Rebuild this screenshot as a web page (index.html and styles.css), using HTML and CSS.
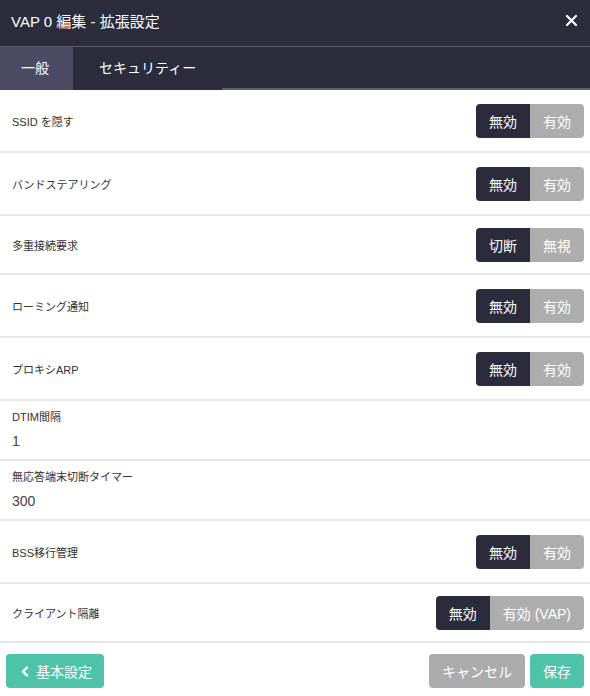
FILE: index.html
```html
<!DOCTYPE html>
<html lang="ja">
<head>
    <meta charset="UTF-8">
    <meta name="viewport" content="width=device-width, initial-scale=1.0">
    <title>VAP 0 編集 - 拡張設定</title>
    <link rel="stylesheet" href="styles.css">
</head>
<body>
    <div class="modal">
        <div class="header">
            <span class="title">VAP 0 編集 - 拡張設定</span>
            <svg class="close" width="11" height="11" viewBox="0 0 11 11">
                <path d="M1 1 L10 10 M10 1 L1 10" stroke="#fff" stroke-width="2.2" stroke-linecap="round"/>
            </svg>
        </div>
        <div class="tabs">
            <span class="tab active">一般</span>
            <span class="tab">セキュリティー</span>
            <span class="tab-rest"></span>
        </div>

        <div class="row">
            <span class="label">SSID を隠す</span>
            <div class="switch"><span class="on">無効</span><span class="off">有効</span></div>
        </div>
        <div class="row">
            <span class="label">バンドステアリング</span>
            <div class="switch"><span class="on">無効</span><span class="off">有効</span></div>
        </div>
        <div class="row short">
            <span class="label">多重接続要求</span>
            <div class="switch"><span class="on">切断</span><span class="off">無視</span></div>
        </div>
        <div class="row">
            <span class="label">ローミング通知</span>
            <div class="switch"><span class="on">無効</span><span class="off">有効</span></div>
        </div>
        <div class="row">
            <span class="label">プロキシARP</span>
            <div class="switch"><span class="on">無効</span><span class="off">有効</span></div>
        </div>
        <div class="field">
            <div class="label">DTIM間隔</div>
            <div class="value">1</div>
        </div>
        <div class="field">
            <div class="label">無応答端末切断タイマー</div>
            <div class="value">300</div>
        </div>
        <div class="row">
            <span class="label">BSS移行管理</span>
            <div class="switch"><span class="on">無効</span><span class="off">有効</span></div>
        </div>
        <div class="row short">
            <span class="label">クライアント隔離</span>
            <div class="switch"><span class="on">無効</span><span class="off">有効 (VAP)</span></div>
        </div>

        <div class="footer">
            <button class="btn teal back">
                <svg width="8" height="11" viewBox="0 0 8 11">
                    <path d="M6 1.5 L2 5.5 L6 9.5" stroke="#fff" stroke-width="2.4" fill="none" stroke-linecap="round" stroke-linejoin="round"/>
                </svg>
                基本設定
            </button>
            <div class="right">
                <button class="btn grey">キャンセル</button>
                <button class="btn teal">保存</button>
            </div>
        </div>
    </div>
</body>
</html>
```

FILE: styles.css
```css
* {
    margin: 0;
    padding: 0;
    box-sizing: border-box;
}

body {
    background-color: #fff;
    font-family: "Liberation Sans", "Noto Sans CJK JP", sans-serif;
    color: #333;
}

.header {
    height: 47px;
    background-color: #2b2d3c;
    border-bottom: 1px solid #5b5c66;
    display: flex;
    align-items: center;
    justify-content: space-between;
    padding: 0 13px 6px 11px;
}

.title {
    color: #fff;
    font-size: 15px;
}

.close {
    display: block;
}

.tabs {
    height: 43px;
    display: flex;
    background-color: #2b2d3c;
}

.tab {
    color: #fff;
    font-size: 14px;
    line-height: 43px;
    padding: 0 26px;
}

.tab.active {
    background-color: #4b4b66;
    padding: 0 24px 0 21px;
}

.tab-rest {
    flex: 1;
    border-bottom: 2px solid #5e606b;
}

.row {
    display: flex;
    align-items: center;
    justify-content: space-between;
    padding: 14px 6px 13px 12px;
    border-bottom: 2px solid #e6e6e6;
}

.row.short {
    padding: 12px 6px 11px 12px;
}

.label {
    font-size: 11px;
    color: #333;
}

.switch {
    display: flex;
    height: 34px;
    border-radius: 4px;
    overflow: hidden;
    font-size: 14px;
    color: #fff;
}

.switch span {
    display: flex;
    align-items: center;
    padding: 0 13px;
}

.switch .on {
    background-color: #2a2c3b;
}

.switch .off {
    background-color: #adadad;
}

.field {
    padding: 8px 12px 8px;
    border-bottom: 2px solid #e6e6e6;
}

.field .label {
    line-height: 16px;
    margin-bottom: 6px;
}

.field .value {
    font-size: 14px;
    line-height: 20px;
    color: #444;
}

.footer {
    display: flex;
    justify-content: space-between;
    padding: 11px 6px 8px;
}

.right {
    display: flex;
    gap: 5px;
}

.btn {
    height: 34px;
    border: none;
    border-radius: 4px;
    color: #fff;
    font-family: "Liberation Sans", "Noto Sans CJK JP", sans-serif;
    font-size: 14px;
    padding: 0 13px;
    display: flex;
    align-items: center;
}

.teal {
    background-color: #4dc3a9;
}

.grey {
    background-color: #ababab;
}

.back {
    padding: 0 12px 0 15px;
    gap: 7px;
}
```
